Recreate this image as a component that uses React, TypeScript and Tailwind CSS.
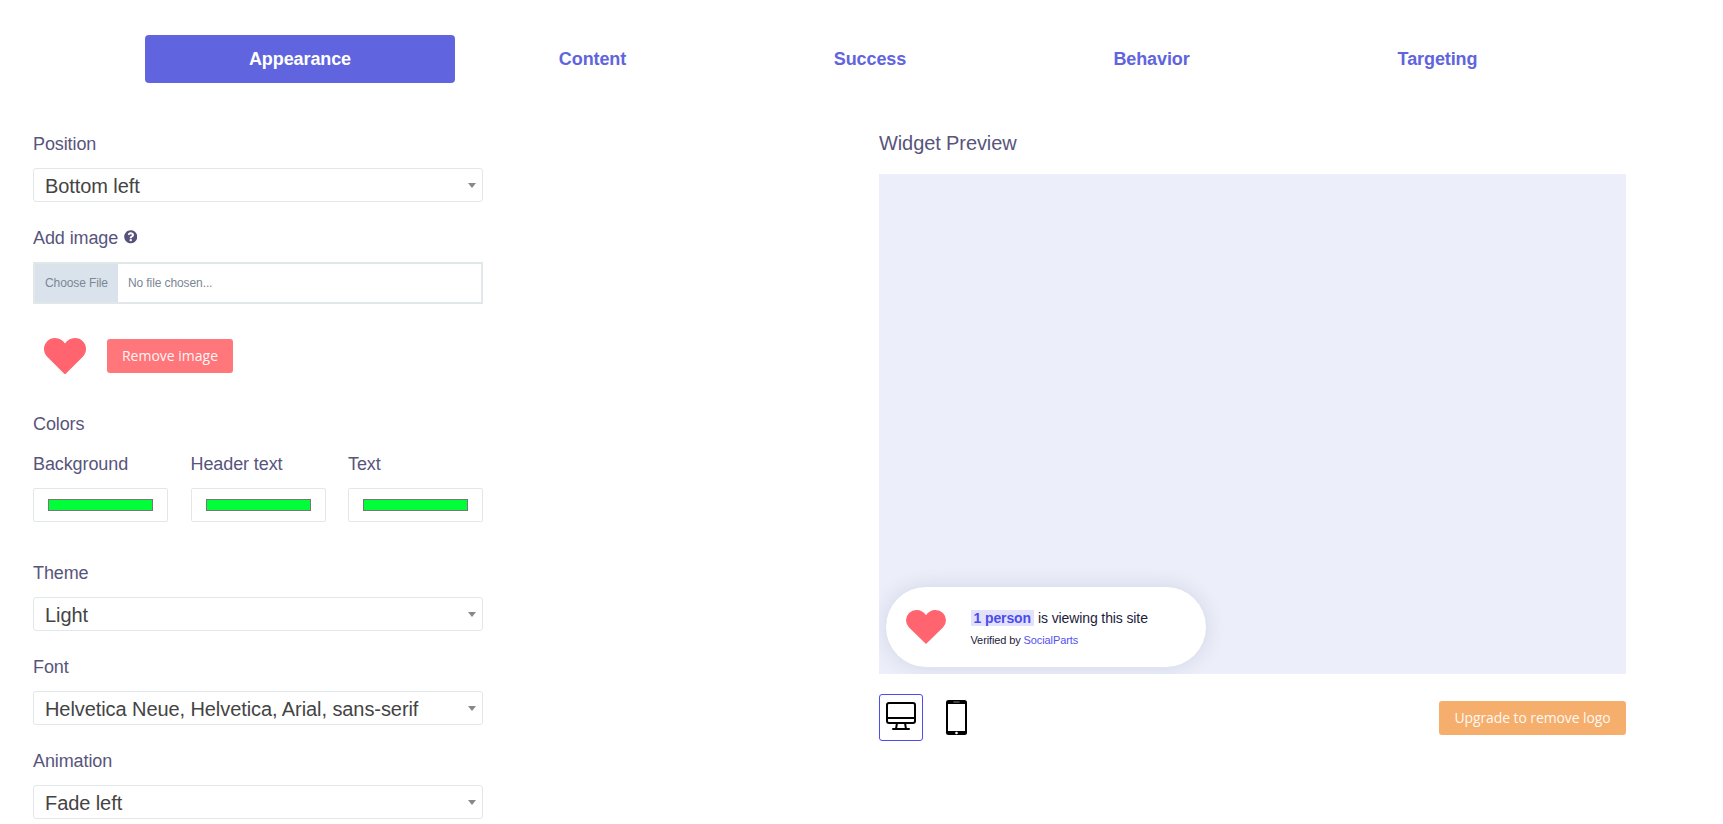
import React from "react";

const tabs = [
  { label: "Appearance", width: "w-[310px]", active: true },
  { label: "Content", width: "w-[275px]", active: false },
  { label: "Success", width: "w-[280px]", active: false },
  { label: "Behavior", width: "w-[283px]", active: false },
  { label: "Targeting", width: "w-[289px]", active: false },
];

function Heart({ className }: { className: string }) {
  return (
    <svg viewBox="0 0 42 36.5" preserveAspectRatio="none" className={className} fill="#ff646f">
      <path d="M21 36.5 L3.2 18.7 A10.9 10.9 0 0 1 0 11 A11 11 0 0 1 11 0 C15.4 0 18.8 2.2 21 5.6 C23.2 2.2 26.6 0 31 0 A11 11 0 0 1 42 11 A10.9 10.9 0 0 1 38.8 18.7 Z" />
    </svg>
  );
}

function Label({ children }: { children: React.ReactNode }) {
  return (
    <div className="flex h-6 items-center text-[18px] leading-6 tracking-[-0.1px] text-[#58557c]">{children}</div>
  );
}

function Select({ label, value }: { label: string; value: string }) {
  return (
    <div>
      <Label>{label}</Label>
      <div className="mt-3 flex h-[34px] items-center justify-between rounded-[3px] border border-[#e2e8ea] pr-[6px] pl-[11px] text-[20px] tracking-[-0.08px] text-[#444]">
        <span className="pt-[2px]">{value}</span>
        <span className="h-0 w-0 border-x-4 border-t-[5px] border-x-transparent border-t-[#888]" />
      </div>
    </div>
  );
}

function ColorField({ label }: { label: string }) {
  return (
    <div className="w-[135px]">
      <Label>{label}</Label>
      <div className="mt-3 flex h-[34px] items-center rounded-[2px] border border-[#e2e8ea] px-[14px]">
        <div className="h-3 w-full border border-[#777] bg-[#00ff38]" />
      </div>
    </div>
  );
}

export default function App() {
  return (
    <div className="h-[824px] w-[1723px] overflow-hidden bg-white font-['Liberation_Sans',Arial,sans-serif]">
      <nav className="flex pt-[35px] pl-[145px]">
        {tabs.map((t) => (
          <div
            key={t.label}
            className={`${t.width} flex h-12 items-center justify-center rounded-[4px] text-[18px] font-bold tracking-[-0.1px] ${
              t.active ? "bg-[#6064de] text-white" : "text-[#6064de]"
            }`}
          >
            {t.label}
          </div>
        ))}
      </nav>

      <div className="flex pl-[33px]">
        <div className="w-[450px] pt-[49px]">
          <Select label="Position" value="Bottom left" />

          <div className="mt-6">
            <Label>
              Add image
              <svg viewBox="0 0 512 512" className="mb-[2px] ml-[5.5px] h-[13.5px] w-[13.5px]" fill="#55517a">
                <path d="M504 256c0 136.997-111.043 248-248 248S8 392.997 8 256C8 119.083 119.043 8 256 8s248 111.083 248 248zM262.655 90c-54.497 0-89.255 22.957-116.549 63.758-3.536 5.286-2.353 12.415 2.715 16.258l34.699 26.31c5.205 3.947 12.621 3.008 16.665-2.122 17.864-22.658 30.113-35.797 57.303-35.797 20.429 0 45.698 13.148 45.698 32.958 0 14.976-12.363 22.667-32.534 33.976C247.128 238.528 216 254.941 216 296v4c0 6.627 5.373 12 12 12h56c6.627 0 12-5.373 12-12v-1.333c0-28.462 83.186-29.647 83.186-106.667 0-58.002-60.165-102-116.531-102zM256 338c-25.365 0-46 20.635-46 46 0 25.364 20.635 46 46 46s46-20.636 46-46c0-25.365-20.635-46-46-46z" />
              </svg>
            </Label>
            <div className="mt-[12px] flex h-[42px] border-2 border-[#e2e8ea] text-[12px] tracking-[-0.1px] text-[#7b8794]">
              <div className="flex w-[83px] items-center bg-[#dae3ec] pl-[10px]">Choose File</div>
              <div className="flex items-center pl-[10px]">No file chosen...</div>
            </div>
          </div>

          <div className="mt-[33px] flex pl-[11px]">
            <Heart className="mt-[0.5px] h-[36.5px] w-[42px]" />
            <div className="mt-[2px] ml-[21px] flex h-[34px] w-[126px] items-center justify-center rounded-[3px] bg-[#ff777b] pb-[2px] font-['Open_Sans',sans-serif] text-[14px] text-white/95">
              Remove image
            </div>
          </div>

          <div className="mt-[38px]">
            <Label>Colors</Label>
          </div>
          <div className="mt-4 flex justify-between">
            <ColorField label="Background" />
            <ColorField label="Header text" />
            <ColorField label="Text" />
          </div>

          <div className="mt-[39px] flex flex-col gap-6">
            <Select label="Theme" value="Light" />
            <Select label="Font" value="Helvetica Neue, Helvetica, Arial, sans-serif" />
            <Select label="Animation" value="Fade left" />
          </div>
        </div>

        <div className="ml-[396px] w-[747px] pt-[48px]">
          <div className="h-6 text-[20px] leading-6 tracking-[-0.1px] text-[#58557c]">Widget Preview</div>
          <div className="mt-[19px] flex h-[500px] items-end overflow-hidden bg-[#eceff9] pb-[7px] pl-[7px]">
            <div className="flex h-20 w-80 items-center rounded-[40px] bg-white pl-5 shadow-[0_0_20px_rgba(50,50,110,0.14)]">
              <Heart className="h-[34px] w-10" />
              <div className="ml-[24.5px] flex flex-col pt-[3px] text-[#1c1b3a]">
                <div className="text-[14px] leading-4 tracking-[-0.11px]">
                  <span className="mr-[4px] inline-block bg-[#e2e2fc] px-[3px] font-bold text-[#4c4cee]">1 person</span>
                  is viewing this site
                </div>
                <div className="mt-[6px] text-[11px] leading-4 tracking-[-0.11px]">
                  Verified by <span className="text-[#5050f0]">SocialParts</span>
                </div>
              </div>
            </div>
          </div>
          <div className="mt-5 flex items-start">
            <div className="flex h-[47px] w-11 justify-center rounded-[3px] border border-[#4c4cf0] pt-[7px]">
              <svg viewBox="0 0 30 28" className="h-7 w-[30px]" fill="none" stroke="#000" strokeWidth="2">
                <rect x="1" y="1" width="28" height="20" rx="2" />
                <path d="M1 16H29M11 21L10 27M19 21L20 27" />
                <path d="M7 27H23" strokeLinecap="round" />
              </svg>
            </div>
            <svg viewBox="0 0 21 35" className="mt-[6px] ml-[23px] h-[35px] w-[21px]">
              <rect width="21" height="35" rx="2.5" />
              <rect x="2" y="4" width="17" height="27" fill="#fff" />
              <path d="M8 2H13" stroke="#555" strokeWidth="1.6" strokeLinecap="round" />
              <circle cx="10.5" cy="33" r="1.3" fill="#fff" />
            </svg>
            <div className="mt-[7px] ml-auto flex h-[34px] w-[187px] items-center justify-center rounded-[3px] bg-[#f6ae6d] pb-[2px] font-['Open_Sans',sans-serif] text-[14px] tracking-[-0.1px] text-white/95">
              Upgrade to remove logo
            </div>
          </div>
        </div>
      </div>
    </div>
  );
}
